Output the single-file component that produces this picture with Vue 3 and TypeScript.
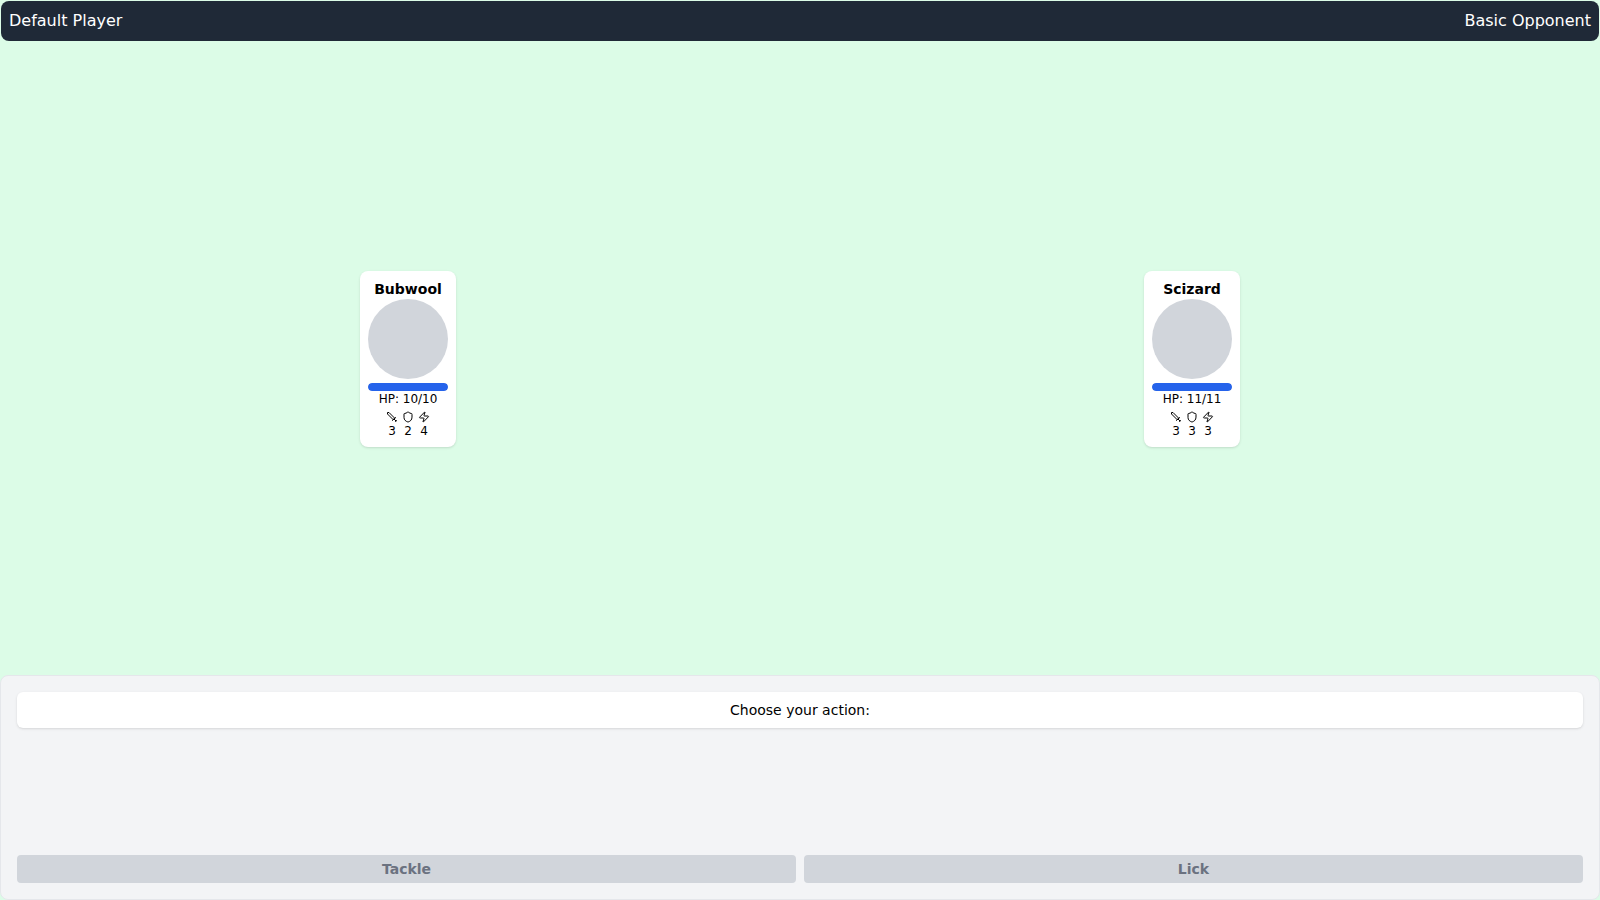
<script setup lang="ts">
interface Creature {
  name: string;
  hp: number;
  maxHp: number;
  stats: number[];
}

const player: Creature = { name: 'Bubwool', hp: 10, maxHp: 10, stats: [3, 2, 4] };
const opponent: Creature = { name: 'Scizard', hp: 11, maxHp: 11, stats: [3, 3, 3] };
const creatures = [player, opponent];
const moves = ['Tackle', 'Lick'];
</script>

<template>
  <div class="screen">
    <header class="topbar">
      <span>Default Player</span>
      <span>Basic Opponent</span>
    </header>

    <main class="field">
      <div v-for="c in creatures" :key="c.name" class="slot">
        <div class="card">
          <div class="name">{{ c.name }}</div>
          <div class="portrait"></div>
          <div class="bar">
            <div class="bar-fill" :style="{ width: (c.hp / c.maxHp) * 100 + '%' }"></div>
          </div>
          <div class="hp">HP: {{ c.hp }}/{{ c.maxHp }}</div>
          <div class="stats">
            <div class="stat">
              <svg viewBox="0 0 24 24" class="icon">
                <polyline points="14.5 17.5 3 6 3 3 6 3 17.5 14.5" />
                <line x1="13" y1="19" x2="19" y2="13" />
                <line x1="16" y1="16" x2="20" y2="20" />
                <line x1="19" y1="21" x2="21" y2="19" />
              </svg>
              <span>{{ c.stats[0] }}</span>
            </div>
            <div class="stat">
              <svg viewBox="0 0 24 24" class="icon">
                <path d="M20 13c0 5-3.5 7.5-7.66 8.95a1 1 0 0 1-.67-.01C7.5 20.5 4 18 4 13V6a1 1 0 0 1 1-1c2 0 4.5-1.2 6.24-2.72a1.17 1.17 0 0 1 1.52 0C14.51 3.81 17 5 19 5a1 1 0 0 1 1 1z" />
              </svg>
              <span>{{ c.stats[1] }}</span>
            </div>
            <div class="stat">
              <svg viewBox="0 0 24 24" class="icon">
                <path d="M4 14a1 1 0 0 1-.78-1.63l9.9-10.2a.5.5 0 0 1 .86.46l-1.92 6.02A1 1 0 0 0 13 10h7a1 1 0 0 1 .78 1.63l-9.9 10.2a.5.5 0 0 1-.86-.46l1.92-6.02A1 1 0 0 0 11 14z" />
              </svg>
              <span>{{ c.stats[2] }}</span>
            </div>
          </div>
        </div>
      </div>
    </main>

    <section class="panel">
      <div class="prompt">Choose your action:</div>
      <div class="moves">
        <button v-for="m in moves" :key="m" class="move" disabled>{{ m }}</button>
      </div>
    </section>
  </div>
</template>

<style>
html, body {
  margin: 0;
  height: 100%;
}
</style>

<style scoped>
.screen {
  width: 1600px;
  height: 900px;
  display: flex;
  flex-direction: column;
  background: #dcfce7;
  font-family: "DejaVu Sans", sans-serif;
  overflow: hidden;
}
.topbar {
  height: 40px;
  margin: 1px 1px 0;
  padding: 0 8px 2px;
  box-sizing: border-box;
  display: flex;
  align-items: center;
  justify-content: space-between;
  background: #1f2937;
  color: #fff;
  font-size: 16px;
  border-radius: 8px;
}
.field {
  flex: 1;
  display: grid;
  grid-template-columns: 1fr 1fr;
  align-items: center;
  padding: 2px 16px 0;
}
.slot {
  display: flex;
  justify-content: center;
}
.card {
  width: 96px;
  box-sizing: border-box;
  padding: 8px;
  display: flex;
  flex-direction: column;
  align-items: center;
  background: #fff;
  border-radius: 8px;
  box-shadow: 0 1px 3px rgba(0, 0, 0, 0.1), 0 1px 2px -1px rgba(0, 0, 0, 0.1);
  color: #000;
}
.name {
  font-size: 14px;
  line-height: 20px;
  font-weight: 700;
}
.portrait {
  width: 80px;
  height: 80px;
  border-radius: 50%;
  background: #d1d5db;
}
.bar {
  width: 100%;
  height: 8px;
  margin-top: 4px;
  border-radius: 4px;
  background: #e5e7eb;
  overflow: hidden;
}
.bar-fill {
  height: 100%;
  background: #2563eb;
  border-radius: 4px;
}
.hp {
  font-size: 12px;
  line-height: 16px;
}
.stats {
  display: flex;
  gap: 4px;
  margin-top: 4px;
}
.stat {
  display: flex;
  flex-direction: column;
  align-items: center;
  width: 12px;
  font-size: 12px;
  line-height: 16px;
}
.icon {
  width: 12px;
  height: 12px;
  display: block;
  fill: none;
  stroke: #000;
  stroke-width: 2;
  stroke-linecap: round;
  stroke-linejoin: round;
}
.panel {
  height: 225px;
  box-sizing: border-box;
  padding: 16px;
  display: flex;
  flex-direction: column;
  justify-content: space-between;
  background: #f3f4f6;
  border: 1px solid #e5e7eb;
  border-radius: 8px;
}
.prompt {
  height: 36px;
  display: flex;
  align-items: center;
  justify-content: center;
  background: #fff;
  border-radius: 6px;
  box-shadow: 0 1px 3px rgba(0, 0, 0, 0.1), 0 1px 2px -1px rgba(0, 0, 0, 0.1);
  font-size: 14px;
  color: #000;
}
.moves {
  display: grid;
  grid-template-columns: 1fr 1fr;
  gap: 8px;
}
.move {
  height: 28px;
  padding: 0;
  border: none;
  border-radius: 4px;
  background: #d1d5db;
  color: #6b7280;
  font-family: inherit;
  font-size: 14px;
  font-weight: 700;
}
</style>
